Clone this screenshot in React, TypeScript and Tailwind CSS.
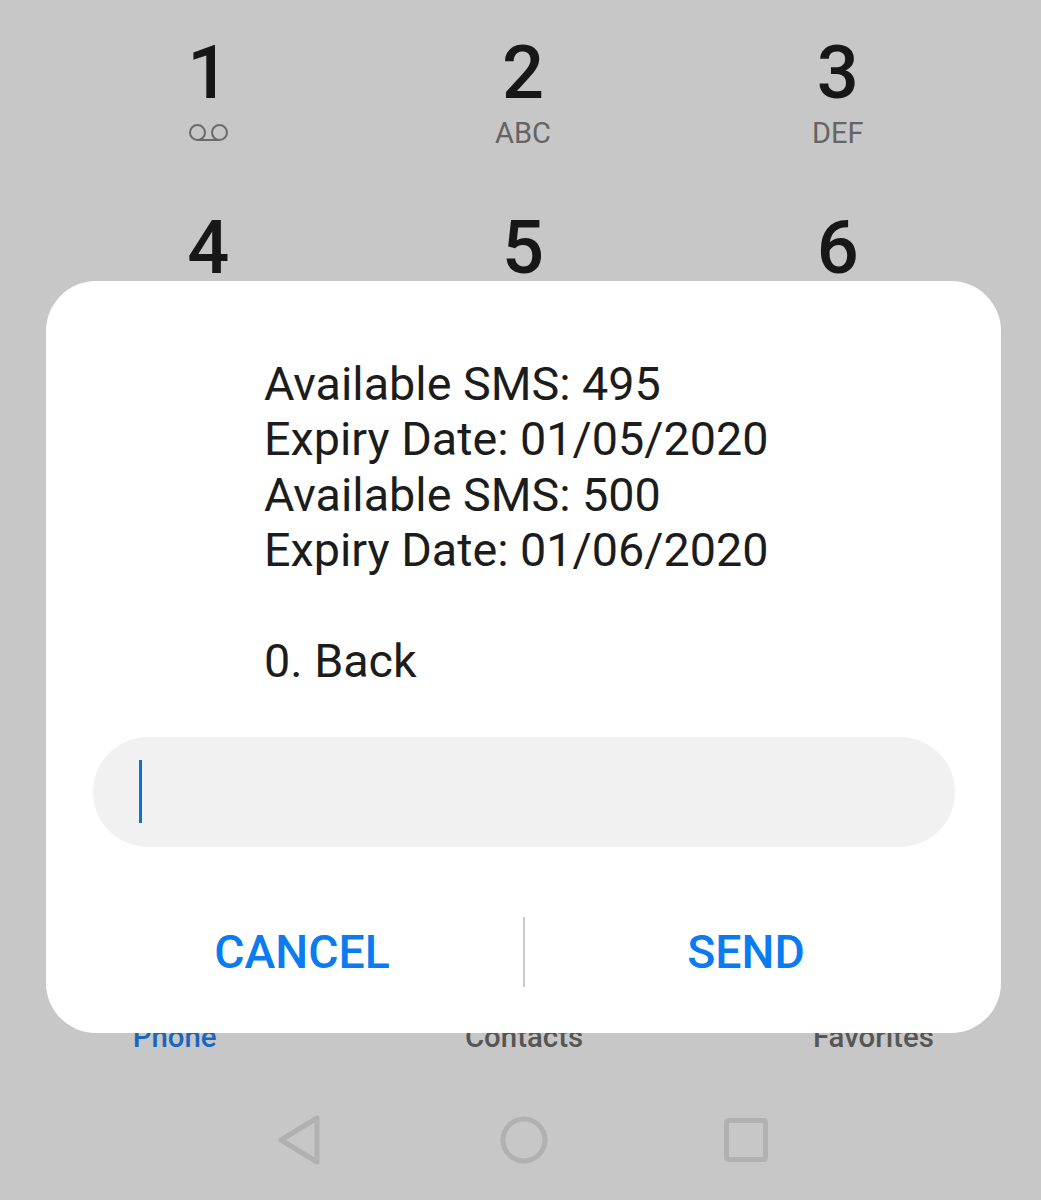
const keys = [
  { digit: "1", sub: "" },
  { digit: "2", sub: "ABC" },
  { digit: "3", sub: "DEF" },
  { digit: "4", sub: "GHI" },
  { digit: "5", sub: "JKL" },
  { digit: "6", sub: "MNO" },
];

const ussdLines = [
  "Available SMS: 495",
  "Expiry Date: 01/05/2020",
  "Available SMS: 500",
  "Expiry Date: 01/06/2020",
  "\u00a0",
  "0. Back",
];

function VoicemailIcon() {
  return (
    <svg width="41" height="18" viewBox="0 0 41 18" fill="none" stroke="#6b6b6b" strokeWidth="2">
      <circle cx="9.5" cy="8.5" r="7.5" />
      <circle cx="31.5" cy="8.5" r="7.5" />
      <path d="M9.5 16H31.5" />
    </svg>
  );
}

export default function App() {
  return (
    <div className="relative h-[1200px] w-full overflow-hidden bg-[#c7c7c7] font-['Roboto',sans-serif]">
      <div className="flex h-full flex-col justify-between">
        {/* Keypad */}
        <div className="grid grid-cols-3 pl-[51px] pr-[46px] pt-[36px]">
          {keys.map((key) => (
            <div key={key.digit} className="flex h-[175px] flex-col items-center">
              <span className="text-[74px] font-medium leading-[74px] text-[#171717]">{key.digit}</span>
              <div className="mt-[9px] flex h-[28px] items-center justify-center text-[29px] leading-[28px] text-[#646464]">
                {key.sub || <VoicemailIcon />}
              </div>
            </div>
          ))}
        </div>

        {/* Tabs + nav bar */}
        <div>
          <div className="grid w-[1048px] grid-cols-3 text-center text-[29.4px] font-medium leading-[34px]">
            <span className="text-[#1766c0]">Phone</span>
            <span className="text-[#565656]">Contacts</span>
            <span className="text-[#565656]">Favorites</span>
          </div>
          <div className="flex h-[146px] items-center pl-[278px] pt-[26px]">
            <svg width="43" height="50" viewBox="0 0 43 50" fill="none" stroke="#b1b1b1" strokeWidth="5" strokeLinejoin="round">
              <path d="M39 3V47L3 25Z" />
            </svg>
            <svg className="ml-[179px]" width="48" height="48" viewBox="0 0 48 48" fill="none" stroke="#b1b1b1" strokeWidth="5">
              <circle cx="24" cy="24" r="21" />
            </svg>
            <svg className="ml-[176px]" width="44" height="44" viewBox="0 0 44 44" fill="none" stroke="#b1b1b1" strokeWidth="5" strokeLinejoin="round">
              <rect x="2.5" y="2.5" width="39" height="39" rx="2" />
            </svg>
          </div>
        </div>
      </div>

      {/* USSD dialog */}
      <div className="absolute left-[46px] top-[281px] flex w-[955px] flex-col rounded-[50px] bg-white pb-[46px] pl-[47px] pr-[46px] pt-[76px]">
        <div className="pl-[171px] text-[46.7px] leading-[55.33px] text-[#1c1c1c]">
          {ussdLines.map((line, i) => (
            <p key={i}>{line}</p>
          ))}
        </div>
        <div className="mt-[48px] flex h-[110px] items-center rounded-full bg-[#f1f1f1] pl-[46px]">
          <div className="h-[63px] w-[3px] bg-[#0a72d8]" />
        </div>
        <div className="mt-[70px] grid h-[70px] grid-cols-[430px_2px_1fr] items-center text-center text-[46.4px] font-medium leading-[68px] text-[#0a7cf0]">
          <button className="pr-[12px] pt-[1px]">CANCEL</button>
          <div className="h-[70px] w-[2px] bg-[#cccccc]" />
          <button className="pl-[12px] pt-[1px]">SEND</button>
        </div>
      </div>
    </div>
  );
}
